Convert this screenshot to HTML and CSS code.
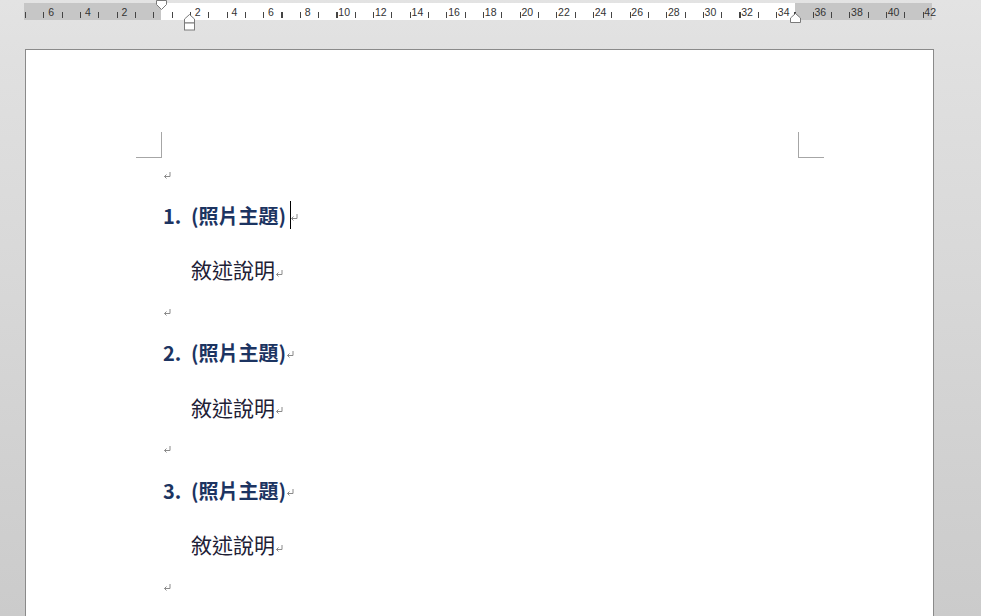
FILE: index.html
```html
<!DOCTYPE html>
<html lang="zh-Hant">
<head>
<meta charset="utf-8">
<title>文件</title>
<link rel="stylesheet" href="styles.css">
</head>
<body>
<div class="app">
  <div class="ruler-wrap">
    <div class="ruler">
      <div class="nums">
        <span>6</span><span>4</span><span>2</span><span></span><span>2</span><span>4</span><span>6</span><span>8</span><span>10</span><span>12</span><span>14</span><span>16</span><span>18</span><span>20</span><span>22</span><span>24</span><span>26</span><span>28</span><span>30</span><span>32</span><span>34</span><span>36</span><span>38</span><span>40</span><span>42</span>
      </div>
      <svg class="mk mk-first" width="11" height="10" viewBox="0 0 11 10"><polygon points="0.5,0.5 10.5,0.5 10.5,4.5 5.5,9.5 0.5,4.5" fill="#fff" stroke="#7a7a7a"/></svg>
      <svg class="mk mk-hang" width="11" height="17" viewBox="0 0 11 17"><polygon points="0.5,9 0.5,5 5.5,0.5 10.5,5 10.5,9" fill="#fff" stroke="#7a7a7a"/><rect x="0.5" y="9" width="10" height="7" fill="#fff" stroke="#7a7a7a"/></svg>
      <svg class="mk mk-right" width="11" height="10" viewBox="0 0 11 10"><polygon points="0.5,9.5 0.5,5 5.5,0.5 10.5,5 10.5,9.5" fill="#fff" stroke="#7a7a7a"/></svg>
    </div>
  </div>

  <div class="page">
    <div class="corners">
      <span class="corner corner-l"></span>
      <span class="corner corner-r"></span>
    </div>
    <div class="doc">
      <p class="para mark-only first"><svg class="pm" width="8" height="7" viewBox="0 0 8 7"><path d="M7 0V4.5H1.5M3.5 2.5L1.5 4.5L3.5 6.5" fill="none" stroke="#8a8a8a"/></svg></p>

      <p class="para heading"><span class="num">1.</span><span class="ht">(照片主題)<span class="cursor"></span><svg class="pm" width="8" height="7" viewBox="0 0 8 7"><path d="M7 0V4.5H1.5M3.5 2.5L1.5 4.5L3.5 6.5" fill="none" stroke="#8a8a8a"/></svg></span></p>
      <p class="para desc">敘述說明<svg class="pm" width="8" height="7" viewBox="0 0 8 7"><path d="M7 0V4.5H1.5M3.5 2.5L1.5 4.5L3.5 6.5" fill="none" stroke="#8a8a8a"/></svg></p>
      <p class="para mark-only"><svg class="pm" width="8" height="7" viewBox="0 0 8 7"><path d="M7 0V4.5H1.5M3.5 2.5L1.5 4.5L3.5 6.5" fill="none" stroke="#8a8a8a"/></svg></p>

      <p class="para heading"><span class="num">2.</span><span class="ht">(照片主題)<svg class="pm" width="8" height="7" viewBox="0 0 8 7"><path d="M7 0V4.5H1.5M3.5 2.5L1.5 4.5L3.5 6.5" fill="none" stroke="#8a8a8a"/></svg></span></p>
      <p class="para desc">敘述說明<svg class="pm" width="8" height="7" viewBox="0 0 8 7"><path d="M7 0V4.5H1.5M3.5 2.5L1.5 4.5L3.5 6.5" fill="none" stroke="#8a8a8a"/></svg></p>
      <p class="para mark-only"><svg class="pm" width="8" height="7" viewBox="0 0 8 7"><path d="M7 0V4.5H1.5M3.5 2.5L1.5 4.5L3.5 6.5" fill="none" stroke="#8a8a8a"/></svg></p>

      <p class="para heading"><span class="num">3.</span><span class="ht">(照片主題)<svg class="pm" width="8" height="7" viewBox="0 0 8 7"><path d="M7 0V4.5H1.5M3.5 2.5L1.5 4.5L3.5 6.5" fill="none" stroke="#8a8a8a"/></svg></span></p>
      <p class="para desc">敘述說明<svg class="pm" width="8" height="7" viewBox="0 0 8 7"><path d="M7 0V4.5H1.5M3.5 2.5L1.5 4.5L3.5 6.5" fill="none" stroke="#8a8a8a"/></svg></p>
      <p class="para mark-only"><svg class="pm" width="8" height="7" viewBox="0 0 8 7"><path d="M7 0V4.5H1.5M3.5 2.5L1.5 4.5L3.5 6.5" fill="none" stroke="#8a8a8a"/></svg></p>
    </div>
  </div>
</div>
</body>
</html>
```

FILE: styles.css
```css
html, body {
  margin: 0;
  padding: 0;
  height: 100%;
  overflow: hidden;
}
body {
  background: linear-gradient(to bottom, #e3e3e3 0px, #e0e0e0 60px, #cbcbcb 616px);
  font-family: "Noto Sans CJK TC", "Noto Sans", sans-serif;
}
.app {
  width: 981px;
  height: 616px;
  overflow: hidden;
}

/* ruler */
.ruler-wrap {
  padding: 3px 0 0 24px;
  box-sizing: border-box;
  height: 49px;
}
.ruler {
  position: relative;
  width: 908px;
  height: 17px;
  background:
    repeating-linear-gradient(to right, #444 0px, #444 1.1px, transparent 1.1px, transparent 18.32px) 0.6px 8.5px / 100% 6px no-repeat,
    linear-gradient(to right, #c6c6c6 0px, #c6c6c6 137px, #ffffff 137px, #ffffff 771px, #c6c6c6 771px);
}
.nums {
  display: flex;
  padding-left: 8.9px;
  font-family: "Liberation Sans", Arial, sans-serif;
  font-size: 10.5px;
  line-height: 19px;
  height: 17px;
  color: #333;
}
.nums span {
  flex: none;
  width: 36.64px;
  text-align: center;
}
.mk {
  position: absolute;
  display: block;
}
.mk-first { left: 132px; top: -3px; }
.mk-hang { left: 160px; top: 11px; }
.mk-right { left: 766px; top: 10px; }

/* page */
.page {
  margin-left: 25px;
  width: 907px;
  height: 600px;
  background: #ffffff;
  border: 1px solid #8a8a8a;
  border-bottom: none;
}
.corners {
  display: flex;
  justify-content: space-between;
  padding: 82px 109px 0 110px;
}
.corner {
  display: block;
  width: 25px;
  height: 25px;
  border-bottom: 1px solid #a6a6a6;
}
.corner-l { border-right: 1px solid #a6a6a6; }
.corner-r { border-left: 1px solid #a6a6a6; }

.doc {
  padding-left: 137px;
}
.para {
  margin: 0;
  display: flex;
  align-items: center;
}
.pm {
  display: inline-block;
  flex: none;
}
.mark-only {
  height: 40.5px;
  margin-top: 3px;
}
.mark-only.first {
  height: 34px;
  margin-top: 0;
  margin-bottom: 3px;
}
.heading {
  height: 40px;
  color: #1c3461;
  font-weight: 700;
  font-size: 20px;
}
.num {
  width: 28px;
  flex: none;
}
.ht {
  display: inline-flex;
  align-items: center;
}
.heading .pm {
  margin-top: 4px;
}
.cursor {
  display: inline-block;
  width: 1px;
  height: 28px;
  background: #000;
  margin: 0 -1px 0 4px;
}
.desc {
  height: 40px;
  margin-top: 14px;
  padding-left: 28px;
  color: #1e2136;
  font-size: 21px;
}
.desc .pm {
  margin-top: 8px;
}
```
